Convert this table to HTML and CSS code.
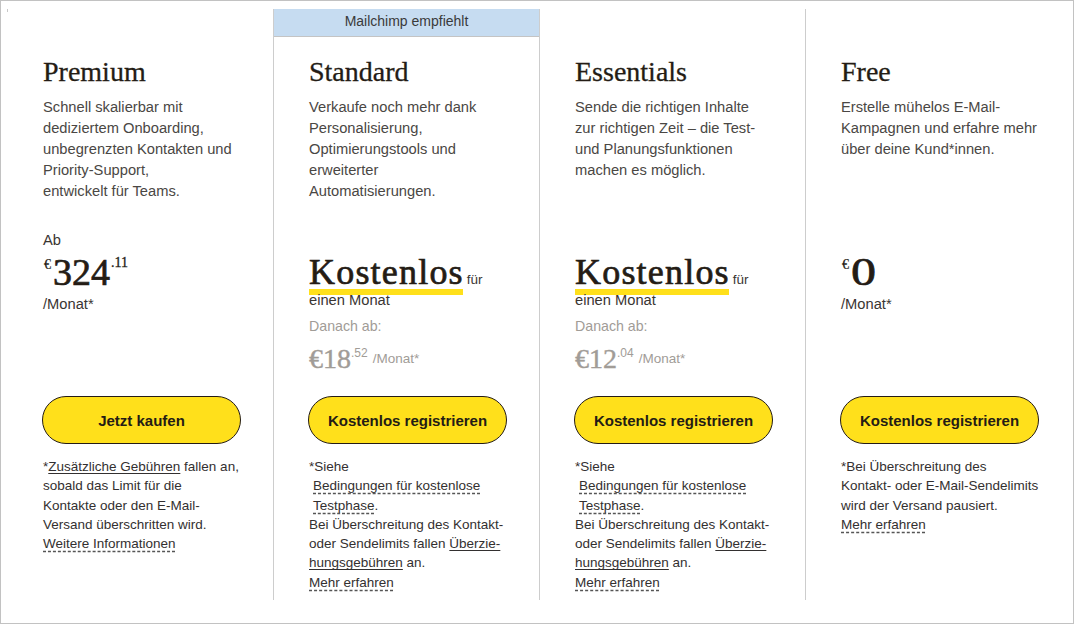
FILE: index.html
```html
<!DOCTYPE html>
<html lang="de">
<head>
<meta charset="utf-8">
<title>Mailchimp Preise</title>
<link rel="stylesheet" href="styles.css">
</head>
<body>
<div class="frame">
  <div class="plans">
    <section class="plan">
      <div class="plan-head"></div>
      <div class="plan-body">
        <h2 class="plan-title">Premium</h2>
        <p class="plan-desc">Schnell skalierbar mit<br>dediziertem Onboarding,<br>unbegrenzten Kontakten und<br>Priority-Support,<br>entwickelt für Teams.</p>
        <div class="plan-price">
          <div class="price-label">Ab</div>
          <div class="price"><span class="price-cur">€</span><span class="price-amount">324</span><span class="price-cents">.11</span></div>
          <div class="price-per">/Monat*</div>
        </div>
        <a class="btn">Jetzt kaufen</a>
        <p class="plan-note">*<span class="link-solid">Zusätzliche Gebühren</span> fallen an,<br>sobald das Limit für die<br>Kontakte oder den E-Mail-<br>Versand überschritten wird.<br><span class="link-dashed">Weitere Informationen</span></p>
      </div>
    </section>

    <section class="plan plan--featured">
      <div class="plan-head">Mailchimp empfiehlt</div>
      <div class="plan-body">
        <h2 class="plan-title">Standard</h2>
        <p class="plan-desc">Verkaufe noch mehr dank<br>Personalisierung,<br>Optimierungstools und<br>erweiterter<br>Automatisierungen.</p>
        <div class="plan-price">
          <div class="trial"><span class="trial-word">Kostenlos</span><span class="trial-for">für</span></div>
          <div class="trial-sub">einen Monat</div>
          <div class="after-label">Danach ab:</div>
          <div class="after-price"><span class="after-amount">€18</span><span class="after-cents">.52</span><span class="after-unit">/Monat*</span></div>
        </div>
        <a class="btn">Kostenlos registrieren</a>
        <p class="plan-note">*Siehe<br><span class="link-dashed indent">Bedingungen für kostenlose</span><br><span class="link-dashed indent">Testphase</span>.<br>Bei Überschreitung des Kontakt-<br>oder Sendelimits fallen <span class="link-solid">Überzie-</span><br><span class="link-solid">hungsgebühren</span> an.<br><span class="link-dashed">Mehr erfahren</span></p>
      </div>
    </section>

    <section class="plan">
      <div class="plan-head"></div>
      <div class="plan-body">
        <h2 class="plan-title">Essentials</h2>
        <p class="plan-desc">Sende die richtigen Inhalte<br>zur richtigen Zeit – die Test-<br>und Planungsfunktionen<br>machen es möglich.</p>
        <div class="plan-price">
          <div class="trial"><span class="trial-word">Kostenlos</span><span class="trial-for">für</span></div>
          <div class="trial-sub">einen Monat</div>
          <div class="after-label">Danach ab:</div>
          <div class="after-price"><span class="after-amount">€12</span><span class="after-cents">.04</span><span class="after-unit">/Monat*</span></div>
        </div>
        <a class="btn">Kostenlos registrieren</a>
        <p class="plan-note">*Siehe<br><span class="link-dashed indent">Bedingungen für kostenlose</span><br><span class="link-dashed indent">Testphase</span>.<br>Bei Überschreitung des Kontakt-<br>oder Sendelimits fallen <span class="link-solid">Überzie-</span><br><span class="link-solid">hungsgebühren</span> an.<br><span class="link-dashed">Mehr erfahren</span></p>
      </div>
    </section>

    <section class="plan">
      <div class="plan-head"></div>
      <div class="plan-body">
        <h2 class="plan-title">Free</h2>
        <p class="plan-desc">Erstelle mühelos E-Mail-<br>Kampagnen und erfahre mehr<br>über deine Kund*innen.</p>
        <div class="plan-price">
          <div class="price-label"></div>
          <div class="price"><span class="price-cur">€</span><span class="price-amount price-amount--zero">0</span></div>
          <div class="price-per">/Monat*</div>
        </div>
        <a class="btn">Kostenlos registrieren</a>
        <p class="plan-note">*Bei Überschreitung des<br>Kontakt- oder E-Mail-Sendelimits<br>wird der Versand pausiert.<br><span class="link-dashed">Mehr erfahren</span></p>
      </div>
    </section>
  </div>
</div>
</body>
</html>
```

FILE: styles.css
```css
html, body {
  margin: 0;
  padding: 0;
  background: #ffffff;
}

body {
  font-family: "Liberation Sans", Arial, sans-serif;
  color: #241c15;
}

.frame {
  position: relative;
  width: 1074px;
  height: 624px;
  box-sizing: border-box;
  border: 1px solid #c2c2c2;
  padding: 8px 0 0 7px;
  overflow: hidden;
}

.frame::before {
  content: "";
  position: absolute;
  left: 6px;
  top: 8px;
  width: 1px;
  height: 3px;
  background: #c8c8c8;
}

.plans {
  display: grid;
  grid-template-columns: repeat(4, 266px);
}

.plan {
  height: 591px;
  box-sizing: border-box;
  border-right: 1px solid #cdcdcd;
}

.plan:last-child {
  border-right: 0;
}

.plan-head {
  height: 28px;
  box-sizing: border-box;
  border-bottom: 1px solid transparent;
  font-size: 14px;
  line-height: 25px;
  text-align: center;
  color: #3a3a3a;
}

.plan--featured .plan-head {
  background: #c6dcf1;
  border-bottom-color: #c4c4c4;
}

.plan-body {
  padding-left: 35px;
}

.plan-title {
  margin: 19px 0 0;
  font-family: "Liberation Serif", "Times New Roman", serif;
  font-weight: 400;
  font-size: 28px;
  line-height: 32px;
  color: #241c15;
  -webkit-text-stroke: 0.3px #241c15;
}

.plan-desc {
  margin: 9px 0 0;
  height: 105px;
  font-size: 14.7px;
  line-height: 21px;
  color: #4a4744;
  white-space: nowrap;
}

.plan-price {
  margin-top: 28px;
  height: 166px;
}

.price-label {
  height: 21px;
  font-size: 14.7px;
  line-height: 21px;
  color: #3a3532;
}

.price {
  display: flex;
  align-items: flex-start;
  margin-top: 2px;
  height: 38px;
  font-family: "Liberation Serif", "Times New Roman", serif;
  color: #241c15;
}

.price-cur {
  margin-top: 5px;
  margin-left: 1px;
  margin-right: 2px;
  font-size: 14px;
  line-height: 14px;
  -webkit-text-stroke: 0.2px #241c15;
}

.price-amount {
  font-size: 38px;
  line-height: 38px;
  -webkit-text-stroke: 0.7px #241c15;
}

.price-amount--zero {
  font-size: 40px;
  letter-spacing: 2px;
  transform: scaleX(1.25);
  transform-origin: left center;
}

.price-cents {
  margin-top: 3px;
  margin-left: 1px;
  font-size: 14px;
  line-height: 14px;
  -webkit-text-stroke: 0.3px #241c15;
}

.price-per {
  margin-top: 3px;
  font-size: 14.7px;
  line-height: 21px;
  color: #3a3532;
}

.trial {
  display: flex;
  align-items: baseline;
  padding-top: 24px;
}

.trial-word {
  display: inline-block;
  padding-bottom: 5px;
  font-family: "Liberation Serif", "Times New Roman", serif;
  font-size: 36px;
  line-height: 36px;
  letter-spacing: 1.2px;
  color: #241c15;
  -webkit-text-stroke: 0.7px #241c15;
  background: linear-gradient(#ffe01b, #ffe01b) left bottom / calc(100% - 1px) 6px no-repeat;
}

.trial-for {
  margin-left: 3px;
  font-size: 13.5px;
  color: #3a3532;
}

.trial-sub {
  margin-top: -3px;
  font-size: 14.7px;
  line-height: 16px;
  color: #3a3532;
}

.after-label {
  margin-top: 8px;
  font-size: 14.2px;
  line-height: 21px;
  color: #a19c97;
}

.after-price {
  display: flex;
  align-items: flex-start;
  margin-top: 9px;
  color: #a19c97;
}

.after-amount {
  font-family: "Liberation Serif", "Times New Roman", serif;
  font-size: 28px;
  line-height: 26px;
  -webkit-text-stroke: 0.4px #a19c97;
}

.after-cents {
  margin-top: 1px;
  font-size: 12px;
  line-height: 12px;
}

.after-unit {
  margin-left: 5px;
  font-size: 13.5px;
  line-height: 26px;
}

.btn {
  display: flex;
  align-items: center;
  justify-content: center;
  width: 199px;
  height: 48px;
  box-sizing: border-box;
  margin-left: -1px;
  border: 1px solid #241c15;
  border-radius: 24px;
  background: #ffe01b;
  font-size: 15px;
  font-weight: 700;
  color: #241c15;
  text-decoration: none;
}

.plan-note {
  margin: 13px 0 0;
  font-size: 13.5px;
  line-height: 19.3px;
  color: #333030;
  white-space: nowrap;
}

.link-solid {
  text-decoration: underline;
  text-underline-offset: 2px;
}

.link-dashed {
  text-decoration: underline dashed #555;
  text-underline-offset: 3px;
}

.indent {
  margin-left: 4px;
}
```
